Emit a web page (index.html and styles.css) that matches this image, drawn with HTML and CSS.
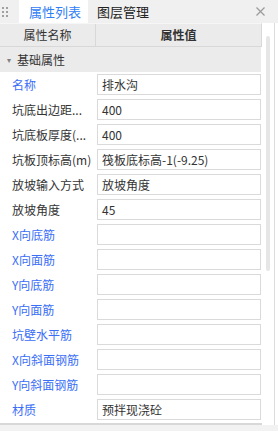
FILE: index.html
```html
<!DOCTYPE html>
<html lang="zh">

<head>
    <meta charset="UTF-8">
    <meta name="viewport" content="width=device-width, initial-scale=1.0">
    <title>属性列表</title>
    <link rel="stylesheet" href="styles.css">
</head>

<body>
    <div class="tabs">
        <div class="grip">
            <span></span><span></span><span></span><span></span><span></span><span></span>
        </div>
        <div class="tab active">属性列表</div>
        <div class="tab">图层管理</div>
        <div class="close">
            <svg width="9" height="9" viewBox="0 0 9 9">
                <path d="M0.5 0.5 L8.5 8.5 M8.5 0.5 L0.5 8.5" stroke="#9a9a9a" stroke-width="1.2" fill="none" />
            </svg>
        </div>
    </div>

    <div class="panel">
        <div class="grid">
            <div class="head">
                <div class="head-name">属性名称</div>
                <div class="head-value">属性值</div>
            </div>
            <div class="group"><span class="arrow">▾</span>基础属性</div>

            <div class="row"><div class="label blue">名称</div><div class="box">排水沟</div></div>
            <div class="row"><div class="label">坑底出边距...</div><div class="box">400</div></div>
            <div class="row"><div class="label">坑底板厚度(...</div><div class="box">400</div></div>
            <div class="row"><div class="label">坑板顶标高(m)</div><div class="box">筏板底标高-1(-9.25)</div></div>
            <div class="row"><div class="label">放坡输入方式</div><div class="box">放坡角度</div></div>
            <div class="row"><div class="label">放坡角度</div><div class="box">45</div></div>
            <div class="row"><div class="label blue">X向底筋</div><div class="box"></div></div>
            <div class="row"><div class="label blue">X向面筋</div><div class="box"></div></div>
            <div class="row"><div class="label blue">Y向底筋</div><div class="box"></div></div>
            <div class="row"><div class="label blue">Y向面筋</div><div class="box"></div></div>
            <div class="row"><div class="label blue">坑壁水平筋</div><div class="box"></div></div>
            <div class="row"><div class="label blue">X向斜面钢筋</div><div class="box"></div></div>
            <div class="row"><div class="label blue">Y向斜面钢筋</div><div class="box"></div></div>
            <div class="row"><div class="label blue">材质</div><div class="box">预拌现浇砼</div></div>
            <div class="hbar"></div>
        </div>
        <div class="track">
            <div class="thumb"></div>
        </div>
    </div>
    <div class="footer"></div>
</body>

</html>
```

FILE: styles.css
```css
body {
    margin: 0;
    width: 278px;
    height: 431px;
    overflow: hidden;
    background: #ffffff;
    font-family: "Noto Sans CJK SC", "Noto Sans", sans-serif;
    font-size: 12px;
    color: #333333;
}

.tabs {
    display: flex;
    align-items: center;
    height: 23px;
    background: #f0f0f0;
}

.grip {
    display: grid;
    grid-template-columns: 2px 2px;
    column-gap: 2px;
    row-gap: 2px;
    padding: 0 11px 0 2px;
}

.grip span {
    width: 2px;
    height: 2px;
    background: #a0a0a0;
}

.tab {
    height: 23px;
    line-height: 23px;
    padding: 0 7px 0 9px;
    font-size: 13px;
    color: #222222;
}

.tab.active {
    background: #ffffff;
    color: #2f80f5;
    padding-left: 10px;
}

.close {
    margin-left: auto;
    margin-right: 13px;
    display: flex;
}

.panel {
    display: flex;
    width: 274px;
    border-right: 1px solid #dcdcdc;
}

.grid {
    width: 262px;
}

.head {
    display: grid;
    grid-template-columns: 96px 1fr;
    height: 24px;
    background: #ebebeb;
    border-top: 1px solid #f6f6f6;
    border-bottom: 1px solid #d8d8d8;
    border-right: 1px solid #d8d8d8;
    box-sizing: border-box;
}

.head-name {
    text-align: center;
    line-height: 22px;
    border-right: 1px solid #d8d8d8;
}

.head-value {
    text-align: center;
    line-height: 22px;
    font-weight: bold;
}

.group {
    height: 25px;
    line-height: 25px;
    background: #ebebeb;
    margin-right: 1px;
}

.arrow {
    display: inline-block;
    width: 17px;
    text-align: center;
    font-size: 8px;
    color: #808080;
    vertical-align: top;
}

.row {
    display: grid;
    grid-template-columns: 97px 1fr;
    align-items: center;
    height: 25px;
}

.label {
    padding-left: 12px;
    white-space: nowrap;
    overflow: hidden;
}

.blue {
    color: #3a6ef6;
}

.box {
    height: 21px;
    line-height: 19px;
    margin-right: 1px;
    padding-left: 4px;
    border: 1px solid #dadada;
    box-sizing: border-box;
    white-space: nowrap;
}

.hbar {
    height: 2px;
    margin-top: 1px;
    background: #d8d8d8;
}

.track {
    flex: 1;
    padding: 13px 0 0 4px;
}

.thumb {
    width: 4px;
    height: 235px;
    background: #e6e6e6;
    border-radius: 2px;
}

.footer {
    height: 10px;
    background: #f2f2f2;
}
```
